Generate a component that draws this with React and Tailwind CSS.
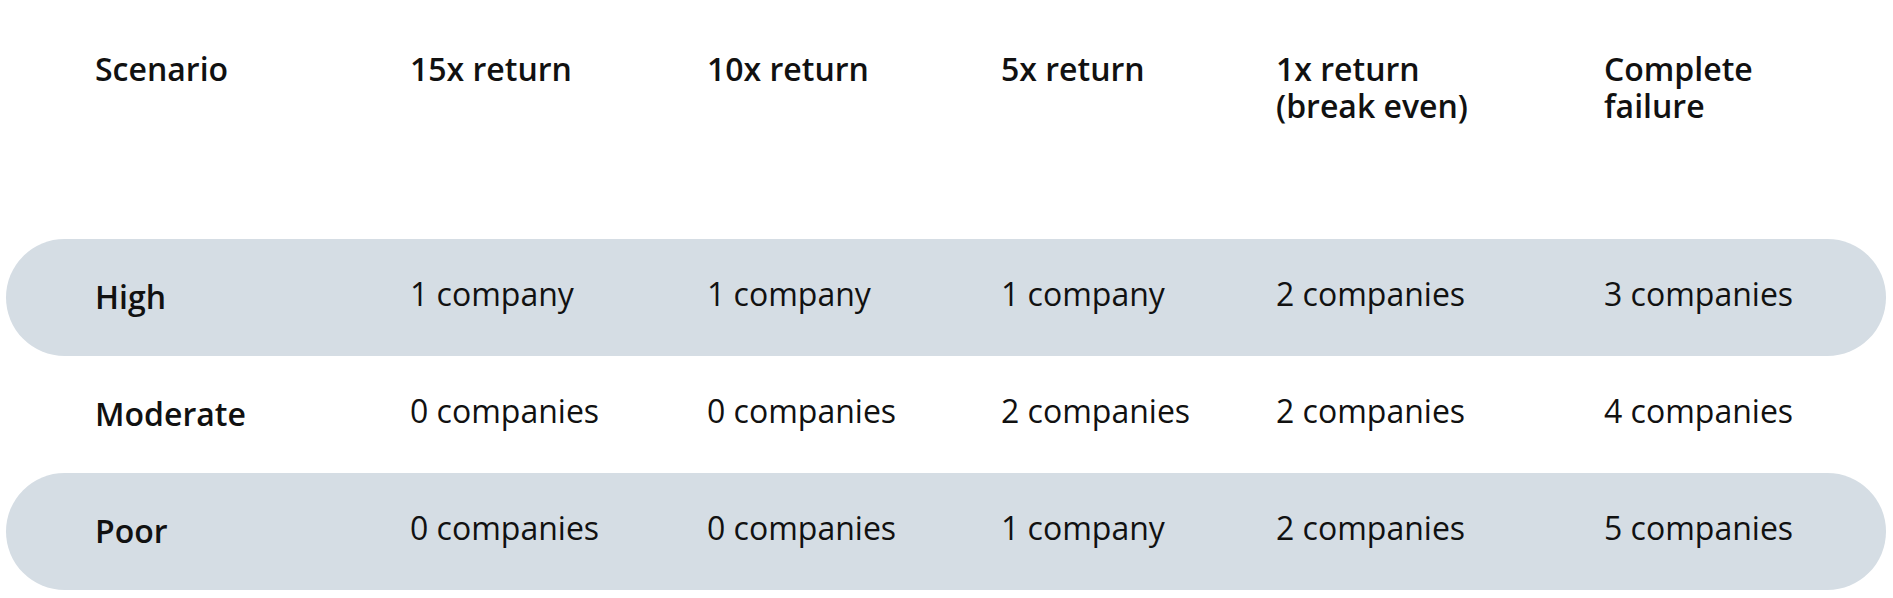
const rows = [
  { label: 'High', values: ['1 company', '1 company', '1 company', '2 companies', '3 companies'], shaded: true },
  { label: 'Moderate', values: ['0 companies', '0 companies', '2 companies', '2 companies', '4 companies'], shaded: false },
  { label: 'Poor', values: ['0 companies', '0 companies', '1 company', '2 companies', '5 companies'], shaded: true },
];

const gridCols = 'grid grid-cols-[315px_297px_294px_275px_328px_1fr]';

export default function App() {
  return (
    <div className="w-[1893px] h-[598px] bg-white text-[#111] font-['Open_Sans',sans-serif] text-[32px] leading-[37px] pl-[6px] pr-[7px]">
      <div className={`${gridCols} pl-[89px] pt-[50px] h-[239px] font-semibold`}>
        <div>Scenario</div>
        <div>15x return</div>
        <div>10x return</div>
        <div>5x return</div>
        <div>
          <div>1x return</div>
          <div>(break even)</div>
        </div>
        <div>
          <div>Complete</div>
          <div>failure</div>
        </div>
      </div>

      {rows.map((row) => (
        <div
          key={row.label}
          className={`${gridCols} items-start pl-[89px] h-[117px] rounded-full ${row.shaded ? 'bg-[#d5dde4]' : ''}`}
        >
          <div className="font-semibold pt-[39px]">{row.label}</div>
          {row.values.map((v, i) => (
            <div key={i} className="pt-[36px]">
              {v}
            </div>
          ))}
        </div>
      ))}
    </div>
  );
}
